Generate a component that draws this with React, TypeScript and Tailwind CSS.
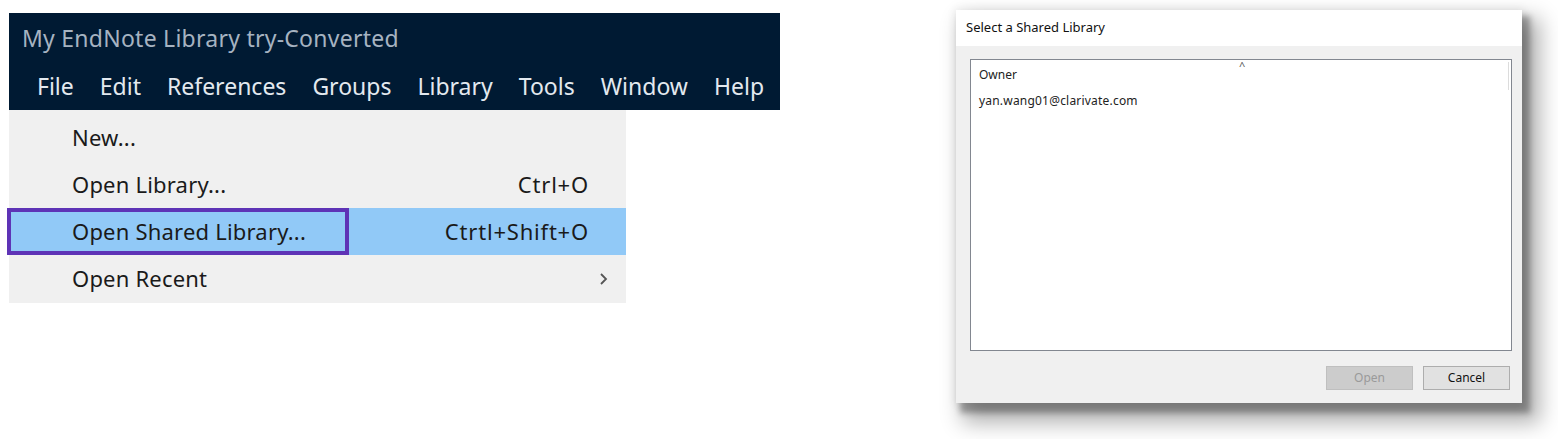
import React from 'react';

const menus = ['File', 'Edit', 'References', 'Groups', 'Library', 'Tools', 'Window', 'Help'];

const items = [
  { label: 'New...', shortcut: '' },
  { label: 'Open Library...', shortcut: 'Ctrl+O' },
  { label: 'Open Shared Library...', shortcut: 'Ctrtl+Shift+O', active: true },
  { label: 'Open Recent', shortcut: '', sub: true },
];

const font = { fontFamily: '"Noto Sans", "Open Sans", sans-serif' };

const MenuPanel: React.FC = () => (
  <div className="w-[771px]" style={font}>
    <div className="bg-[#001a33] h-[97px] flex flex-col">
      <div className="h-[50px] flex items-center pl-[13px] text-[23px] tracking-[0.25px] text-[#a6b3c1]">
        My EndNote Library try-Converted
      </div>
      <div className="flex items-center gap-[26px] pl-[28px] h-[46px] text-[23px] text-[#e3e9ef]">
        {menus.map((m) => (
          <span key={m}>{m}</span>
        ))}
      </div>
    </div>

    <div className="w-[617px] bg-[#f0f0f0] pt-[4px] pb-[1px] flex">
      <div className="flex-1">
        {items.map((it) => (
          <div
            key={it.label}
            className={`relative h-[47px] flex items-center text-[22px] text-[#1a1a1a] ${
              it.active ? 'bg-[#91c9f7]' : ''
            }`}
          >
            {it.active && (
              <div className="absolute -left-[2px] top-0 w-[342px] h-[47px] border-[4px] border-[#5e33b6]" />
            )}
            <span className="pl-[63px] flex-1 tracking-[0.2px]">{it.label}</span>
            {it.shortcut && <span className="pr-[37px] tracking-[0.8px]">{it.shortcut}</span>}
            {it.sub && (
              <svg width="12" height="16" viewBox="0 0 12 16" className="mr-[16px]">
                <path d="M3 3 L8 8 L3 13" fill="none" stroke="#555" strokeWidth="1.8" />
              </svg>
            )}
          </div>
        ))}
      </div>
    </div>
  </div>
);

const Dialog: React.FC = () => (
  <div
    className="w-[566px] h-[393px] bg-[#f0f0f0] flex flex-col shadow-[6px_8px_6px_2px_rgba(0,0,0,0.3),12px_14px_20px_6px_rgba(0,0,0,0.3),0_0_8px_2px_rgba(0,0,0,0.06)]"
    style={font}
  >
    <div className="h-[36px] bg-white flex items-center pl-[10px] text-[13px] text-[#111]">
      Select a Shared Library
    </div>
    <div className="flex-1 flex flex-col px-[14px] pt-[13px]">
      <div className="relative h-[292px] w-[542px] bg-white border border-[#828790] text-[12px] text-[#222]">
        <div className="absolute left-[268px] top-[-2px] text-[11px] text-[#555]">^</div>
        <div className="absolute right-[2px] top-[2px] w-px h-[28px] bg-[#dcdcdc]" />
        <div className="pl-[8px] pt-[6px] h-[32px]">Owner</div>
        <div className="pl-[8px] tracking-[0.2px]">yan.wang01@clarivate.com</div>
      </div>
      <div className="flex justify-end gap-[10px] pt-[15px]">
        <div className="w-[87px] h-[24px] bg-[#cccccc] border border-[#bfbfbf] flex items-center justify-center text-[12px] text-[#9a9a9a]">
          Open
        </div>
        <div className="w-[87px] h-[24px] bg-[#e1e1e1] border border-[#adadad] flex items-center justify-center text-[12px] text-[#111] mr-[-2px]">
          Cancel
        </div>
      </div>
    </div>
  </div>
);

export default function App() {
  return (
    <div className="w-[1558px] h-[439px] bg-white flex">
      <div className="pl-[9px] pt-[13px]">
        <MenuPanel />
      </div>
      <div className="pl-[176px] pt-[10px]">
        <Dialog />
      </div>
    </div>
  );
}
